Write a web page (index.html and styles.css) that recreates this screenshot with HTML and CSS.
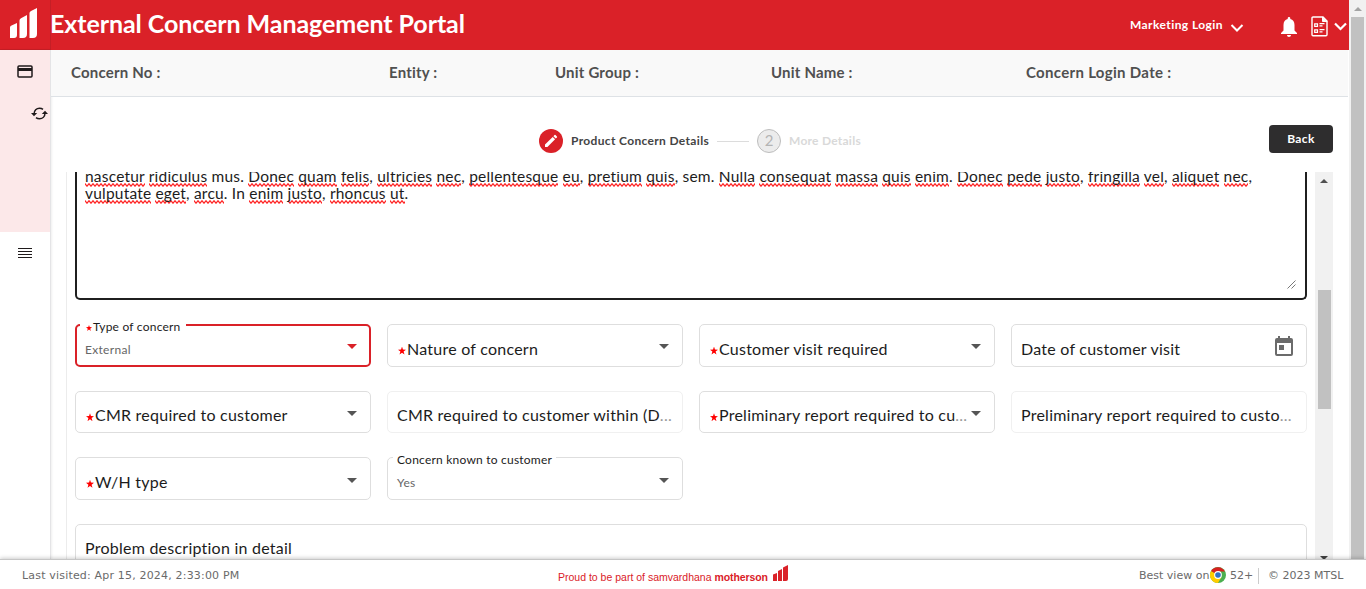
FILE: index.html
```html
<!DOCTYPE html>
<html lang="en">
<head>
<meta charset="utf-8">
<title>External Concern Management Portal</title>
<link rel="stylesheet" href="styles.css">
</head>
<body>
<div class="app">
  <div class="viewport">
    <div class="page">
      <header class="topbar">
        <div class="brand">
          <svg width="29" height="32" viewBox="0 0 29 32" fill="#fff"><path d="M1 18.500 Q1 17.300 2 16.800 L8 14V26Q8 29 5 29H1ZM10.500 11.500Q10.500 10 12 9.300L18 6V25Q18 29 14 29H10.500ZM20.500 4Q20.500 2.800 22 2L28-1V25Q28 29 24 29H20.500Z"/></svg>
        </div>
        <h1 class="title">External Concern Management Portal</h1>
        <div class="user">
          <span class="user-name">Marketing Login</span>
          <svg class="user-chev" width="14" height="10" viewBox="0 0 14 10" fill="none" stroke="#fff" stroke-width="2"><path d="M1.500 2 7 7.500 12.500 2"/></svg>
          <svg class="bell" width="16" height="20" viewBox="0 0 16 20" fill="#fff"><path d="M8 0c.8 0 1.300.6 1.300 1.400v.7C12 2.800 13.500 5 13.500 8v5.500L16 16v1H0v-1l2.500-2.500V8c0-3 1.500-5.200 4.200-5.900v-.7C6.700.6 7.200 0 8 0ZM6 18h4c0 1.200-.9 2-2 2s-2-.8-2-2Z"/></svg>
          <svg class="doc" width="17" height="21" viewBox="0 0 17 21" fill="none" stroke="#fff"><path stroke-width="1.400" d="M1 2Q1 1 2 1H12L16 5V18.500Q16 19.700 15 19.700H2Q1 19.700 1 18.500Z"/><path fill="#fff" d="M11.500 1V5.500H16Z"/><path stroke-width="1.200" d="M3.700 7.800h2.800v2.500H3.700ZM3.700 13.800h2.800v2.500H3.700ZM8.500 7.600h5M8.500 9.900h3M8.500 13.600h5M8.500 15.900h3"/></svg>
          <svg class="doc-chev" width="13" height="9" viewBox="0 0 13 9" fill="none" stroke="#fff" stroke-width="2.200"><path d="M1 1.500 6.500 7 12 1.500"/></svg>
        </div>
      </header>
      <div class="body">
        <nav class="sidebar">
          <div class="side-active">
            <svg class="ic-card" width="16" height="13" viewBox="0 0 16 13"><rect x="1" y="1" width="14" height="11" rx="1" fill="none" stroke="#1f1a1b" stroke-width="1.500"/><path fill="#1f1a1b" d="M1 3h14v3H1Z"/></svg>
            <svg class="ic-sync" width="17" height="13" viewBox="0 0 17 13" fill="none" stroke="#1f1a1b" stroke-width="1.500"><path d="M3 7C3 3.300 5.600 1.200 8.500 1.200c1.400 0 2.500.4 3.500 1.200M14 6c0 3.700-2.600 5.800-5.500 5.800-1.400 0-2.500-.4-3.500-1.200"/><path fill="#1f1a1b" stroke="none" d="M0 6 3 9.200 6.200 6ZM10.800 7 14 3.800 17 7Z"/></svg>
          </div>
          <svg class="ic-menu" width="14" height="10" viewBox="0 0 14 10" fill="#1f1a1b"><path d="M0 0h14v1H0ZM0 3h14v1H0ZM0 6h14v1H0ZM0 9h14v1H0Z"/></svg>
        </nav>
        <main class="main">
          <div class="infobar">
            <span class="info-no">Concern No :</span><span class="info-entity">Entity :</span><span class="info-group">Unit Group :</span><span class="info-unit">Unit Name :</span><span class="info-date">Concern Login Date :</span>
          </div>
          <div class="stepbar">
            <div class="steps">
              <span class="dot dot-active"><svg width="14" height="14" viewBox="0 0 14 14" fill="#fff"><path d="M1 10.600 8.700 2.900 11.100 5.300 3.400 13H1ZM9.400 2.200 10.500 1.100Q11 .6 11.500 1.100L12.900 2.500Q13.400 3 12.900 3.500L11.800 4.600Z"/></svg></span>
              <span class="step-name">Product Concern Details</span>
              <span class="step-line"></span>
              <span class="dot dot-next">2</span>
              <span class="step-name step-next">More Details</span>
            </div>
            <button class="back">Back</button>
          </div>
          <div class="scroller">
            <div class="form">
              <div class="textbox">
                <div class="prose"><u>nascetur</u> <u>ridiculus</u> mus. <u>Donec</u> <u>quam</u> <u>felis</u>, <u>ultricies</u> <u>nec</u>, <u>pellentesque</u> <u>eu</u>, <u>pretium</u> <u>quis</u>, sem. <u>Nulla</u> <u>consequat</u> <u>massa</u> <u>quis</u> <u>enim</u>. <u>Donec</u> <u>pede</u> <u>justo</u>, <u>fringilla</u> <u>vel</u>, <u>aliquet</u> <u>nec</u>,<br><u>vulputate</u> <u>eget</u>, <u>arcu</u>. In <u>enim</u> <u>justo</u>, <u>rhoncus</u> <u>ut</u>.</div>
                <svg class="grip" width="9" height="9" viewBox="0 0 9 9" stroke="#555" stroke-width=".8"><path d="M.5 8.500 8.500.5M4.500 8.500 8.500 4.500"/></svg>
              </div>
              <div class="grid">
                <div class="field focused"><span class="float"><i class="star"></i>Type of concern</span><span class="value">External</span><i class="arrow"></i></div>
                <div class="field"><span class="label"><i class="star"></i>Nature of concern</span><i class="arrow"></i></div>
                <div class="field"><span class="label"><i class="star"></i>Customer visit required</span><i class="arrow"></i></div>
                <div class="field"><span class="label">Date of customer visit</span><svg class="cal" width="18" height="20" viewBox="0 0 18 20" fill="#6b6b6b"><path fill-rule="evenodd" d="M3 0h2v2h8V0h2v2h1q2 0 2 2v14q0 2-2 2H2q-2 0-2-2V4q0-2 2-2h1ZM2 7v11h14V7ZM4 9h5v5H4Z"/></svg></div>
                <div class="field"><span class="label"><i class="star"></i>CMR required to customer</span><i class="arrow"></i></div>
                <div class="field disabled"><span class="label">CMR required to customer within (D<em>...</em></span></div>
                <div class="field"><span class="label"><i class="star"></i>Preliminary report required to cu<em>...</em></span><i class="arrow"></i></div>
                <div class="field disabled"><span class="label">Preliminary report required to custo<em>...</em></span></div>
                <div class="field"><span class="label"><i class="star"></i>W/H type</span><i class="arrow"></i></div>
                <div class="field"><span class="float">Concern known to customer</span><span class="value">Yes</span><i class="arrow"></i></div>
                <div class="field wide"><span class="label">Problem description in detail</span></div>
              </div>
            </div>
            <div class="inner-bar"><i class="tri-up"></i><i class="inner-thumb"></i><i class="tri-down"></i></div>
          </div>
        </main>
      </div>
    </div>
    <div class="page-bar"><i class="tri-up pale"></i><i class="page-thumb"></i></div>
  </div>
  <footer class="footer">
    <span class="visited">Last visited: Apr 15, 2024, 2:33:00 PM</span>
    <span class="proud">Proud to be part of samvardhana <b>motherson</b><svg width="15" height="16" viewBox="0 0 15 16" fill="#da2128"><path d="M0 9.500 4 8V16H0ZM5 6 9 4V16H5ZM10 2.500 15 0V14Q15 16 13 16H10Z"/></svg></span>
    <span class="best">Best view on</span>
    <svg class="chrome" width="16" height="16" viewBox="0 0 16 16"><circle cx="8" cy="8" r="8" fill="#4caf50"/><path fill="#ffcd00" d="M8 8 1.070 4A8 8 0 0 0 8 16L11.500 10Z"/><path fill="#d8201f" d="M8 8 1.070 4A8 8 0 0 1 14.930 4.500L8 4.500Z"/><circle cx="8" cy="8" r="3.900" fill="#fff"/><circle cx="8" cy="8" r="2.800" fill="#2f72c4"/></svg>
    <span class="ver">52+</span>
    <span class="copy">© 2023 MTSL</span>
  </footer>
</div>
</body>
</html>
```

FILE: styles.css
```css
* { box-sizing: border-box; }
body { margin: 0; font-family: Lato, "Open Sans", sans-serif; background: #fff; color: #1c1c1c; }
svg, i { display: block; flex: none; }
.app { display: flex; flex-direction: column; height: 589px; overflow: hidden; }
.viewport { display: flex; height: 559px; }
.page { width: 1349px; display: flex; flex-direction: column; }

.topbar { height: 50px; flex: none; display: flex; background: #da2128; color: #fff; }
.brand { width: 51px; height: 50px; padding: 9px 0 0 9px; border-right: 1px solid #c51f26; border-bottom: 1px solid #c51f26; }
.brand svg { overflow: visible; }
.title { margin: 0; font-size: 25px; line-height: 30px; padding-top: 8px; letter-spacing: -.07px; width: 1080px; margin-left: -1px; white-space: nowrap; }
.user { display: flex; }
.user-name { font-size: 12px; font-weight: 700; letter-spacing: .42px; line-height: 16px; margin-top: 17px; width: 100px; white-space: nowrap; }
.user-chev { margin-top: 23px; }
.bell { margin: 17px 0 0 37px; }
.doc { margin: 16px 0 0 14px; }
.doc-chev { margin: 22px 0 0 6px; }

.body { display: flex; flex: 1; min-height: 0; }
.sidebar { width: 51px; flex: none; border-right: 1px solid #e4e4e6; box-shadow: 1px 0 2px #0001; }
.side-active { height: 182px; background: #fce8e9; padding: 15px 0 0 17px; }
.ic-sync { margin: 29px 0 0 14px; }
.ic-menu { margin: 16px 0 0 18px; }
.main { width: 1298px; display: flex; flex-direction: column; }

.infobar { height: 47px; flex: none; width: 1297px; background: #f9f9f9; border-bottom: 1px solid #dee2e6; display: flex; padding: 12px 0 0 20px; font-size: 15px; font-weight: 700; line-height: 20px; color: #505050; letter-spacing: .2px; white-space: nowrap; }
.info-no { width: 318px; }
.info-entity { width: 166px; }
.info-group { width: 216px; }
.info-unit { width: 255px; }
.info-date { letter-spacing: .31px; }

.stepbar { height: 75px; flex: none; display: flex; justify-content: space-between; padding: 28px 16px 0 488px; }
.steps { display: flex; align-items: center; height: 32px; }
.dot { width: 24px; height: 24px; border-radius: 50%; display: flex; align-items: center; justify-content: center; }
.dot-active { background: #da2128; }
.dot-next { background: #ececec; border: 1px solid #bdbdbd; color: #b4b4b4; font-size: 15px; padding-bottom: 2px; }
.step-name { font-size: 12px; font-weight: 700; letter-spacing: .34px; color: #444; margin-left: 8px; padding-bottom: 2px; width: 146px; white-space: nowrap; }
.step-next { color: #d9d9d9; letter-spacing: .25px; width: auto; }
.step-line { width: 32px; height: 1px; background: #dcdcdc; margin-right: 8px; }
.back { width: 64px; height: 28px; border: 0; border-radius: 4px; background: #2e2d2e; color: #fff; font: 700 12px Lato, sans-serif; letter-spacing: .4px; padding-bottom: 3px; }

.scroller { flex: 1; min-height: 0; display: flex; justify-content: space-between; padding: 0 16px 0 15px; overflow: hidden; }
.form { width: 1241px; border-left: 1px solid #ececec; padding-left: 8px; }
.textbox { height: 128px; width: 1232px; border: 2px solid #1f1f1f; border-top: 0; border-radius: 0 0 5px 5px; padding: 0 8px; overflow: hidden; position: relative; }
.prose { font-size: 15.5px; line-height: 17px; letter-spacing: .2px; white-space: nowrap; margin-top: -4px; }
.prose u { text-decoration: none; padding-bottom: 2px; background: url("data:image/svg+xml,%3Csvg xmlns='http://www.w3.org/2000/svg' width='4' height='4'%3E%3Cpath d='M-1 .2 0 .8 2 3.200 4 .8 5 .2' fill='none' stroke='%23f22' stroke-width='1.200'/%3E%3C/svg%3E") repeat-x left bottom; }
.grip { position: absolute; right: 9px; bottom: 9px; }

.grid { display: grid; grid-template-columns: repeat(4, 296px); column-gap: 16px; grid-auto-rows: 42.600px; row-gap: 24px; padding-top: 24px; }
.field { position: relative; border: 1px solid #dedede; border-radius: 5px; padding: 0 13px 0 9px; display: flex; justify-content: space-between; }
.focused { border: 2px solid #da2128; padding: 0 12px 0 8px; }
.focused .arrow { border-top-color: #da2128; margin-top: 18px; }
.disabled { border-color: #f0f0f0; }
.wide { grid-column: span 4; }
.label { font-size: 16px; line-height: 20px; letter-spacing: .24px; margin-top: 13.600px; display: flex; white-space: nowrap; }
.label em { font-style: normal; color: #999; }
.value { font-size: 12px; line-height: 16px; letter-spacing: .3px; color: #666; margin-top: 17px; }
.focused .value { margin-top: 16px; }
.float { position: absolute; left: 5px; top: -6.500px; background: #fff; padding: 0 4px; display: flex; font-size: 12px; line-height: 15px; letter-spacing: .22px; white-space: nowrap; }
.focused .float { left: 3px; top: -7px; padding: 0 5px; }
.star { width: 8px; height: 8px; background: #f00; clip-path: polygon(50% 0, 62% 35%, 100% 38%, 70% 61%, 81% 100%, 50% 77%, 19% 100%, 30% 61%, 0 38%, 38% 35%); }
.label .star { margin: 8px 1px 0 1px; }
.float .star { width: 6px; height: 6px; margin: 6px 1px 0 1px; }
.arrow { border: 5px solid transparent; border-top-color: #555; border-bottom: 0; width: 10px; height: 5px; margin-top: 19.400px; }
.cal { margin: 11px 0 0; }

.inner-bar { width: 18px; height: 389px; background: #f1f1f1; display: flex; flex-direction: column; align-items: center; padding-top: 7px; }
.inner-thumb { width: 13px; height: 119px; background: #c1c1c1; margin-top: 107px; }
.tri-up { width: 8px; height: 4px; border: 4px solid transparent; border-top: 0; border-bottom-color: #505050; }
.tri-down { border: 4px solid transparent; border-bottom: 0; border-top-color: #404040; margin-top: 147px; }

.page-bar { width: 17px; background: #f1f1f1; display: flex; flex-direction: column; align-items: center; padding-top: 7px; }
.pale { border-bottom-color: #a3a3a3; }
.page-thumb { width: 13px; flex: 1; background: #c1c1c1; margin-top: 6px; }

.footer { position: relative; height: 30px; border-top: 1px solid #c6c6c6; box-shadow: 0 -1px 4px #0003; background: #fff; display: flex; align-items: flex-start; padding-left: 22px; font: 11px/16px "DejaVu Sans", Verdana, sans-serif; color: #6a6a6a; white-space: nowrap; }
.footer > span { margin-top: 8px; }
.visited { width: 536px; letter-spacing: .18px; }
.footer .proud { width: 581px; margin-top: 5px; display: flex; color: #da2128; font: 10.500px/24px "Liberation Sans", Arial, sans-serif; white-space: pre; }
.proud b { width: 59px; letter-spacing: -.1px; }
.best { width: 71px; }
.chrome { margin: 7px 0 0; }
.ver { margin-left: 4px; width: 28px; }
.copy { border-left: 1px solid #ccc; padding-left: 9px; }
```
